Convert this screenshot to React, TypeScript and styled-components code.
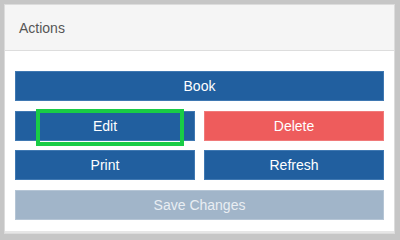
import React from "react";
import styled, { createGlobalStyle } from "styled-components";

const GlobalStyle = createGlobalStyle`
  html, body {
    margin: 0;
    padding: 0;
    background: #c6c6c6;
  }
  body {
    font-family: "Liberation Sans", Arial, sans-serif;
  }
`;

type Variant = "primary" | "danger" | "disabled";

const colors: Record<Variant, { bg: string; border: string; fg: string }> = {
  primary: { bg: "#215f9f", border: "#3f78b2", fg: "#ffffff" },
  danger: { bg: "#ee5c5c", border: "#f07a7a", fg: "#ffffff" },
  disabled: { bg: "#a1b5c9", border: "#b5c5d5", fg: "#e9eef3" },
};

export default function App() {
  return (
    <>
      <GlobalStyle />
      <Page>
        <Panel>
          <Header>Actions</Header>
          <Body>
            <Button $variant="primary">Book</Button>
            <Row>
              <Cell>
                <Button $variant="primary">Edit</Button>
                <Highlight />
              </Cell>
              <Button $variant="danger">Delete</Button>
            </Row>
            <Row>
              <Button $variant="primary">Print</Button>
              <Button $variant="primary">Refresh</Button>
            </Row>
            <Button $variant="disabled" disabled>
              Save Changes
            </Button>
          </Body>
        </Panel>
      </Page>
    </>
  );
}

const Page = styled.div`
  padding: 4px 5px 5px 4px;
  width: 400px;
  height: 239px;
  box-sizing: border-box;
`;

const Panel = styled.section`
  width: 391px;
  height: 230px;
  box-sizing: border-box;
  background: #ffffff;
  border: 1px solid #dcdcdc;
  box-shadow: inset 0 -3px 0 -1px #e6e6e6;
  display: flex;
  flex-direction: column;
`;

const Header = styled.div`
  height: 46px;
  box-sizing: border-box;
  background: #f5f5f5;
  border-bottom: 1px solid #dddddd;
  display: flex;
  align-items: center;
  padding: 0 14px;
  font-size: 14px;
  color: #555555;
`;

const Body = styled.div`
  padding: 20px 10px 0 10px;
  display: flex;
  flex-direction: column;
  gap: 9.5px;
`;

const Row = styled.div`
  display: grid;
  grid-template-columns: 1fr 1fr;
  column-gap: 9px;
`;

const Cell = styled.div`
  position: relative;
  display: flex;
  flex-direction: column;
`;

const Button = styled.button<{ $variant: Variant }>`
  height: 30px;
  width: 100%;
  box-sizing: border-box;
  margin: 0;
  padding: 0;
  border: 1px solid ${(p) => colors[p.$variant].border};
  border-radius: 0;
  background: ${(p) => colors[p.$variant].bg};
  color: ${(p) => colors[p.$variant].fg};
  font-family: "Liberation Sans", Arial, sans-serif;
  font-size: 14px;
  text-align: center;
  cursor: pointer;
  &:disabled {
    cursor: default;
  }
`;

const Highlight = styled.div`
  position: absolute;
  left: 21px;
  top: -2px;
  width: 148px;
  height: 37px;
  box-sizing: border-box;
  border: 4px solid #19cc46;
  pointer-events: none;
`;
